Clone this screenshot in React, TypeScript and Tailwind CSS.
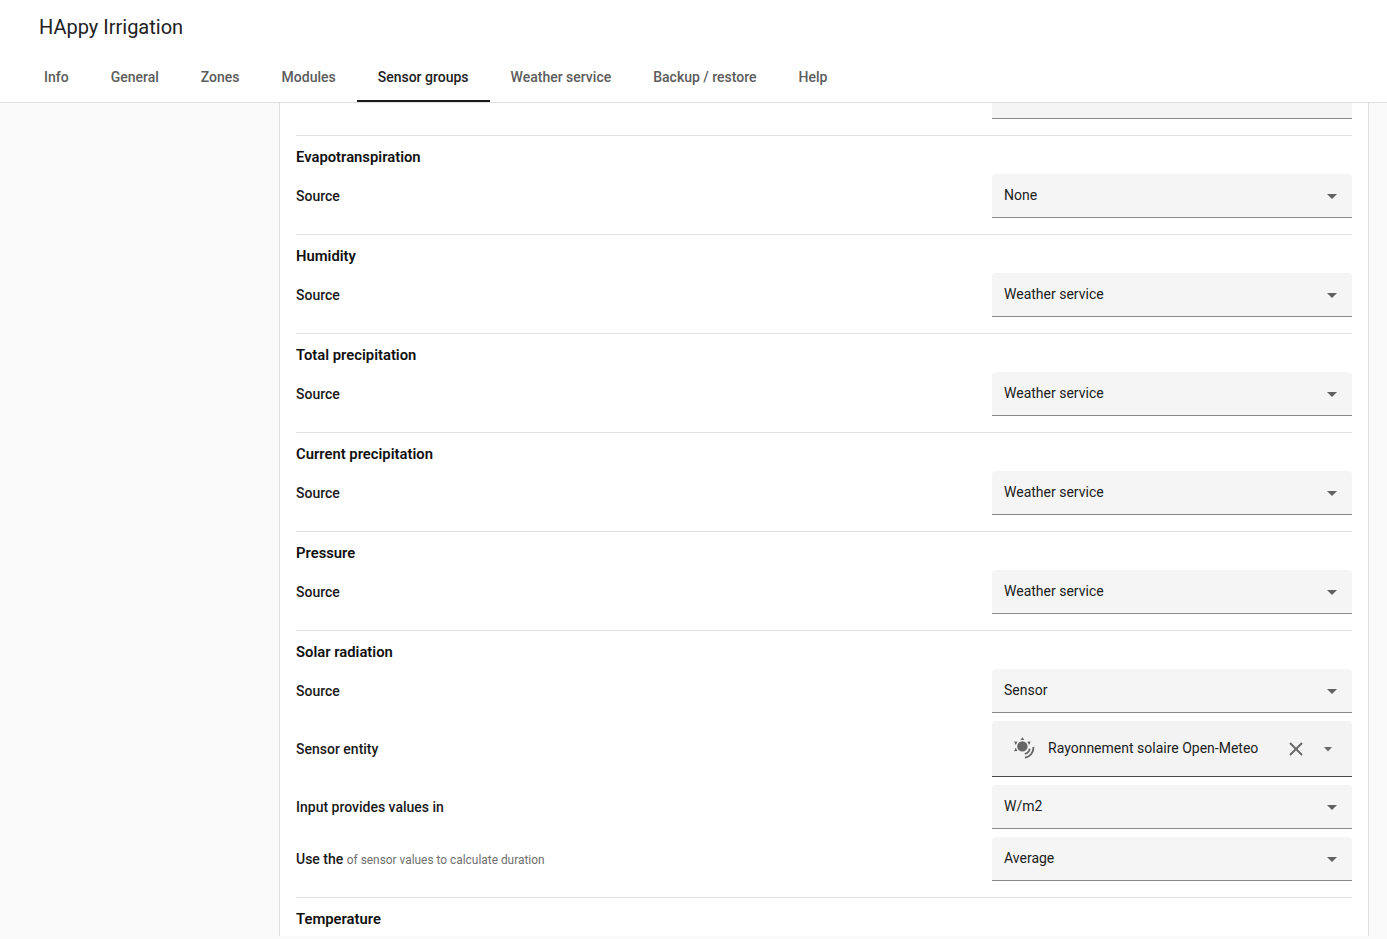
const tabs = ['Info', 'General', 'Zones', 'Modules', 'Sensor groups', 'Weather service', 'Backup / restore', 'Help']

function Select({ value }: { value: string }) {
  return (
    <div className="w-[360px] h-[44px] bg-[#f5f5f5] rounded-t border-b border-[#8a8a8a] flex items-center justify-between pl-3 pr-[15px] shrink-0">
      <span className="text-sm text-[#212121] -mt-[1px]">{value}</span>
      <svg viewBox="0 0 10 5" className="w-[10px] h-[5px] mt-[1px] shrink-0">
        <polygon points="0,0 10,0 5,5" fill="#616161" />
      </svg>
    </div>
  )
}

function EntityPicker() {
  return (
    <div className="w-[360px] h-[56px] bg-[#f3f3f3] rounded-t border-b border-[#4a4a4a] flex items-center pl-[19px] pr-[19px] shrink-0">
      <svg viewBox="0 0 24 24" className="w-[26px] h-[26px] shrink-0 -mt-[1px]" fill="#666">
        <circle cx="10.500" cy="10.500" r="4.800" />
        <path d="M10.500 2l1.800 2.700h-3.600zM2.800 6l3.200.2-1.700 3.100zM18.200 6l-1.500 3.300-1.700-3.100zM2.800 15l1.500-3.300 1.700 3.100z" />
        <path d="M20.700 11c.4 5-3 9.200-7.800 10" fill="none" stroke="#666" strokeWidth="1.700" />
        <path d="M17.300 12.600c-.4 2.500-2 4.300-4.600 4.900" fill="none" stroke="#666" strokeWidth="1.700" />
      </svg>
      <span className="ml-[11px] -mt-[1px] text-sm text-[#212121] whitespace-nowrap">Rayonnement solaire Open-Meteo</span>
      <svg viewBox="0 0 14 14" className="w-[14px] h-[14px] ml-[31px] shrink-0">
        <path d="M1 1l12 12M13 1L1 13" stroke="#666" strokeWidth="1.900" fill="none" />
      </svg>
      <svg viewBox="0 0 10 5" className="w-[10px] h-[5px] ml-[20px] mt-[1px] shrink-0">
        <polygon points="1,0 9,0 5,4.500" fill="#6a6a6a" />
      </svg>
    </div>
  )
}

function SectionTitle({ children }: { children: string }) {
  return <h3 className="h-[38px] pt-[11px] text-[14.8px] leading-5 font-semibold text-[#111]">{children}</h3>
}

function SourceSection({ title, value }: { title: string; value: string }) {
  return (
    <section className="border-t border-[#e0e0e0] pb-4">
      <SectionTitle>{title}</SectionTitle>
      <div className="flex items-center justify-between">
        <span className="text-sm font-medium text-[#1a1a1a]">Source</span>
        <Select value={value} />
      </div>
    </section>
  )
}

export default function App() {
  return (
    <div className="h-[939px] overflow-hidden bg-[#fafafa] flex flex-col font-['Roboto',sans-serif]">
      <header className="bg-white border-b border-[#e0e0e0] h-[103px] shrink-0">
        <h1 className="h-[54px] pl-[39px] pt-[13px] text-xl leading-7 text-[#212121]">HAppy Irrigation</h1>
        <nav className="flex pl-[23px]">
          {tabs.map((t) => (
            <div
              key={t}
              className={
                t === 'Sensor groups'
                  ? 'h-[48px] px-[21px] flex items-center border-b-2 border-[#1a1a1a] text-sm font-medium text-[#212121]'
                  : 'h-[48px] px-[21px] flex items-center border-b-2 border-transparent text-sm font-medium text-[#5c5c5c]'
              }
            >
              {t}
            </div>
          ))}
        </nav>
      </header>

      <main className="flex-1 min-h-0 pl-[279px] pr-[18px] pb-[3px]">
        <div className="h-full overflow-hidden bg-white border-x border-[#e0e0e0] px-4">
          <div className="h-[32px] flex justify-end items-start">
            <div className="w-[360px] h-[16px] bg-[#f5f5f5] border-b border-[#8a8a8a]" />
          </div>
          <SourceSection title="Evapotranspiration" value="None" />
          <SourceSection title="Humidity" value="Weather service" />
          <SourceSection title="Total precipitation" value="Weather service" />
          <SourceSection title="Current precipitation" value="Weather service" />
          <SourceSection title="Pressure" value="Weather service" />

          <section className="border-t border-[#e0e0e0] pb-4 flex flex-col gap-2">
            <div>
              <SectionTitle>Solar radiation</SectionTitle>
              <div className="flex items-center justify-between">
                <span className="text-sm font-medium text-[#1a1a1a]">Source</span>
                <Select value="Sensor" />
              </div>
            </div>
            <div className="flex items-center justify-between">
              <span className="text-sm font-medium text-[#1a1a1a]">Sensor entity</span>
              <EntityPicker />
            </div>
            <div className="flex items-center justify-between">
              <span className="text-sm font-medium text-[#1a1a1a]">Input provides values in</span>
              <Select value="W/m2" />
            </div>
            <div className="flex items-center justify-between">
              <span className="text-sm font-medium text-[#1a1a1a]">
                Use the <span className="text-[11.9px] font-normal text-[#6f6f6f]">of sensor values to calculate duration</span>
              </span>
              <Select value="Average" />
            </div>
          </section>

          <section className="border-t border-[#e0e0e0]">
            <SectionTitle>Temperature</SectionTitle>
          </section>
        </div>
      </main>
    </div>
  )
}
